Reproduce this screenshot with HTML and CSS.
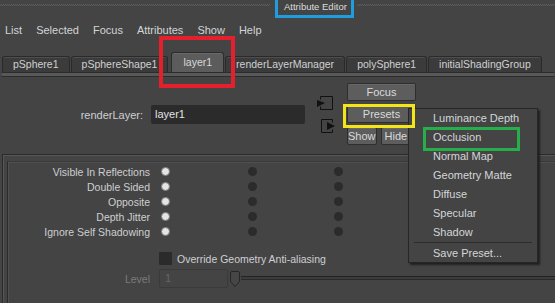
FILE: index.html
```html
<!DOCTYPE html>
<html>
<head>
<meta charset="utf-8">
<link rel="stylesheet" href="styles.css">
</head>
<body>
<div class="titlebar">
  <div class="grip grip-left"></div>
  <div class="title">Attribute Editor</div>
  <div class="grip grip-right"></div>
</div>
<div class="menubar">
  <span>List</span><span>Selected</span><span>Focus</span><span>Attributes</span><span>Show</span><span>Help</span>
</div>
<div class="tabs">
  <div class="tab">pSphere1</div>
  <div class="tab">pSphereShape1</div>
  <div class="tab active">layer1</div>
  <div class="tab">renderLayerManager</div>
  <div class="tab">polySphere1</div>
  <div class="tab">initialShadingGroup</div>
</div>
<div class="stripe"></div>
<div class="form-top">
  <div class="rl">
    <div class="rl-label">renderLayer:</div>
    <div class="field">layer1</div>
  </div>
  <div class="icons">
    <svg class="ico ico1" width="16" height="14" viewBox="0 0 16 14">
      <path d="M3.5 3.5 V0.5 H15.5 V13.5 H3.5 V10.5" fill="none" stroke="#111" stroke-width="1"/>
      <polygon points="0,4 8,7 0,11" fill="#111"/>
    </svg>
    <svg class="ico ico2" width="15" height="14" viewBox="0 0 15 14">
      <path d="M11.5 3.5 V0.5 H0.5 V13.5 H11.5 V10.5" fill="none" stroke="#111" stroke-width="1"/>
      <polygon points="6,3 14,7 6,11" fill="#111"/>
    </svg>
  </div>
  <div class="buttons">
    <div class="btn">Focus</div>
    <div class="btn">Presets</div>
    <div class="btn-row">
      <div class="btn btn-show">Show</div>
      <div class="btn btn-hide">Hide</div>
    </div>
  </div>
</div>
<div class="frame">
  <div class="frame-inner">
    <div class="row"><div class="lbl">Visible In Reflections</div><span class="dot on"></span><span class="dot off d1"></span><span class="dot off d2"></span></div>
    <div class="row"><div class="lbl">Double Sided</div><span class="dot on"></span><span class="dot off d1"></span><span class="dot off d2"></span></div>
    <div class="row"><div class="lbl">Opposite</div><span class="dot on"></span><span class="dot off d1"></span><span class="dot off d2"></span></div>
    <div class="row"><div class="lbl">Depth Jitter</div><span class="dot on"></span><span class="dot off d1"></span><span class="dot off d2"></span></div>
    <div class="row"><div class="lbl">Ignore Self Shadowing</div><span class="dot on"></span><span class="dot off d1"></span><span class="dot off d2"></span></div>
    <div class="check-row"><span class="checkbox"></span><span class="check-text">Override Geometry Anti-aliasing</span></div>
    <div class="level-row">
      <div class="lbl dim">Level</div>
      <div class="level-field">1</div>
      <svg class="handle" width="12" height="18" viewBox="0 0 12 18">
        <path d="M1.5 3 Q1.5 1.5 3 1.5 H9 Q10.5 1.5 10.5 3 V11.5 L6 16.5 L1.5 11.5 Z" fill="#464646" stroke="#262626" stroke-width="1"/>
      </svg>
      <div class="track"></div>
    </div>
  </div>
</div>

<div class="popup">
  <div class="item">Luminance Depth</div>
  <div class="item">Occlusion</div>
  <div class="item">Normal Map</div>
  <div class="item">Geometry Matte</div>
  <div class="item">Diffuse</div>
  <div class="item">Specular</div>
  <div class="item">Shadow</div>
  <div class="sep"></div>
  <div class="item">Save Preset...</div>
</div>

<div class="anno anno-red"></div>
<div class="anno anno-yellow"></div>
<div class="anno anno-green"></div>
</body>
</html>
```
FILE: styles.css
```css
html, body {
  margin: 0;
  padding: 0;
}
body {
  width: 555px;
  height: 303px;
  overflow: hidden;
  position: relative;
  background: #444444;
  color: #cdcfd2;
  font-family: "Liberation Sans", Arial, sans-serif;
  font-size: 10.5px;
}

/* title bar */
.titlebar {
  display: flex;
  align-items: flex-start;
  height: 18px;
}
.grip {
  height: 2px;
  margin-top: 4px;
  background: repeating-conic-gradient(#5e5e5e 0 25%, transparent 0 50%) 0 0 / 2px 2px;
}
.grip-left { flex: 0 0 270px; margin-right: 5px; }
.grip-right { flex: 1; margin-left: 3px; }
.title {
  box-sizing: border-box;
  width: 79px;
  height: 18px;
  border: 3px solid #1f9de0;
  border-top: none;
  padding: 2px 0 0 6px;
  font-size: 9.5px;
  line-height: 9px;
  color: #dcdcdc;
  white-space: nowrap;
}

/* menu bar */
.menubar {
  display: flex;
  gap: 14px;
  height: 34px;
  box-sizing: border-box;
  padding: 5px 0 0 5px;
  line-height: 14px;
  font-size: 11px;
  color: #d2d4d6;
}

/* tabs */
.tabs {
  display: flex;
  align-items: flex-end;
  height: 20px;
  padding-left: 2px;
  gap: 1px;
}
.tab {
  box-sizing: border-box;
  height: 16px;
  line-height: 15px;
  padding: 0 10px;
  background: #3b3b3b;
  border: 1px solid #2a2a2a;
  border-bottom: none;
  border-radius: 3px 3px 0 0;
  box-shadow: inset 0 1px 0 #4e4e4e;
  white-space: nowrap;
  color: #cfd1d3;
  font-size: 10.5px;
}
.tab.active {
  height: 20px;
  line-height: 19px;
  margin: 0 0 0 2px;
  padding: 0 11px;
  background: #5c5c5c;
  border-color: #2c2c2c;
  box-shadow: inset 0 1px 0 #6a6a6a;
  color: #d8d8d8;
}
.stripe {
  height: 3px;
  margin: 0 0 0 1px;
  background: #585858;
  border-top: 1px solid #2c2c2c;
  border-bottom: 1px solid #2c2c2c;
  border-radius: 2px;
}

/* top form */
.form-top {
  display: flex;
  align-items: flex-start;
  height: 77px;
  box-sizing: border-box;
  padding-top: 6px;
}
.rl {
  display: flex;
  align-items: center;
  margin-top: 22px;
}
.rl-label {
  width: 143px;
  text-align: right;
  margin-right: 8px;
  font-size: 11px;
}
.field {
  box-sizing: border-box;
  width: 154px;
  height: 19px;
  line-height: 19px;
  padding-left: 4px;
  background: #2b2b2b;
  border-radius: 2px;
  color: #e2e2e2;
  font-size: 11px;
}
.icons {
  display: flex;
  flex-direction: column;
  width: 18px;
  margin-left: 12px;
  padding-top: 13px;
  gap: 9px;
}
.ico { display: block; }
.ico2 { margin-left: 4px; }
.buttons {
  display: flex;
  flex-direction: column;
  gap: 4px;
  margin-left: 12px;
  width: 69px;
}
.btn {
  box-sizing: border-box;
  height: 18px;
  line-height: 16px;
  text-align: center;
  background: #5d5d5d;
  border: 1px solid #2e2e2e;
  border-radius: 2px;
  box-shadow: inset 0 1px 0 #686868;
  color: #dadada;
  font-size: 11px;
}
.btn-row {
  display: flex;
  gap: 4px;
}
.btn-show { width: 32px; }
.btn-hide { width: 40px; text-align: left; padding-left: 3px; }

/* frame */
.frame {
  box-sizing: border-box;
  margin-left: 2px;
  height: 149px;
  border-top: 1px solid #2b2b2b;
  border-left: 1px solid #2b2b2b;
  box-shadow: inset 1px 1px 0 #565656;
  padding: 6px 0 0 4px;
}
.frame-inner {
  box-sizing: border-box;
  height: 142px;
  border-top: 1px solid #3a3a3a;
  border-left: 1px solid #2b2b2b;
  box-shadow: inset 1px 1px 0 #505050;
  padding-top: 2px;
}
.row {
  display: flex;
  align-items: center;
  height: 15px;
}
.lbl {
  width: 142px;
  text-align: right;
  white-space: nowrap;
  font-size: 10.5px;
}
.lbl.dim { color: #7b7b7b; }
.dot {
  width: 9px;
  height: 9px;
  border-radius: 50%;
  box-sizing: border-box;
}
.dot.on {
  margin-left: 11px;
  background: #e4e4e4;
  border: 1px solid #7a7a7a;
}
.dot.off {
  background: #2b2b2b;
}
.dot.d1 { margin-left: 78px; }
.dot.d2 { margin-left: 77px; }

.check-row {
  display: flex;
  align-items: center;
  margin-top: 13px;
  height: 13px;
}
.checkbox {
  width: 13px;
  height: 13px;
  margin-left: 151px;
  background: #2b2b2b;
  border-radius: 1px;
}
.check-text {
  margin-left: 5px;
  font-size: 10.5px;
  white-space: nowrap;
}
.level-row {
  display: flex;
  align-items: center;
  margin-top: 4px;
  height: 19px;
}
.level-field {
  box-sizing: border-box;
  width: 69px;
  height: 19px;
  margin-left: 9px;
  line-height: 17px;
  padding-left: 5px;
  border: 1px solid #3a3a3a;
  border-radius: 2px;
  color: #666;
  font-size: 11px;
}
.handle {
  display: block;
  margin-left: 1px;
}
.track {
  flex: 1;
  height: 2px;
  margin-top: -2px;
  background: #3c3c3c;
  border-top: 1px solid #222;
  border-bottom: 1px solid #2a2a2a;
}

/* popup menu */
.popup {
  position: absolute;
  left: 408px;
  top: 108px;
  width: 130px;
  height: 155px;
  box-sizing: border-box;
  background: #444;
  border: 1px solid #262626;
  box-shadow: 2px 2px 2px rgba(0, 0, 0, 0.55);
}
.item {
  height: 19px;
  line-height: 19px;
  padding-left: 24px;
  color: #d4d6d8;
  font-size: 11px;
  white-space: nowrap;
}
.sep {
  height: 1px;
  margin: 0 5px 1px 5px;
  background: #2c2c2c;
}

/* annotation frames */
.anno {
  position: absolute;
  box-sizing: border-box;
}
.anno-red {
  left: 159px;
  top: 36px;
  width: 76px;
  height: 52px;
  border: 4px solid #e3202b;
}
.anno-yellow {
  left: 343px;
  top: 104px;
  width: 72px;
  height: 24px;
  border: 3px solid #f3e51a;
}
.anno-green {
  left: 423px;
  top: 127px;
  width: 97px;
  height: 24px;
  border: 3px solid #25ae4a;
}
```
